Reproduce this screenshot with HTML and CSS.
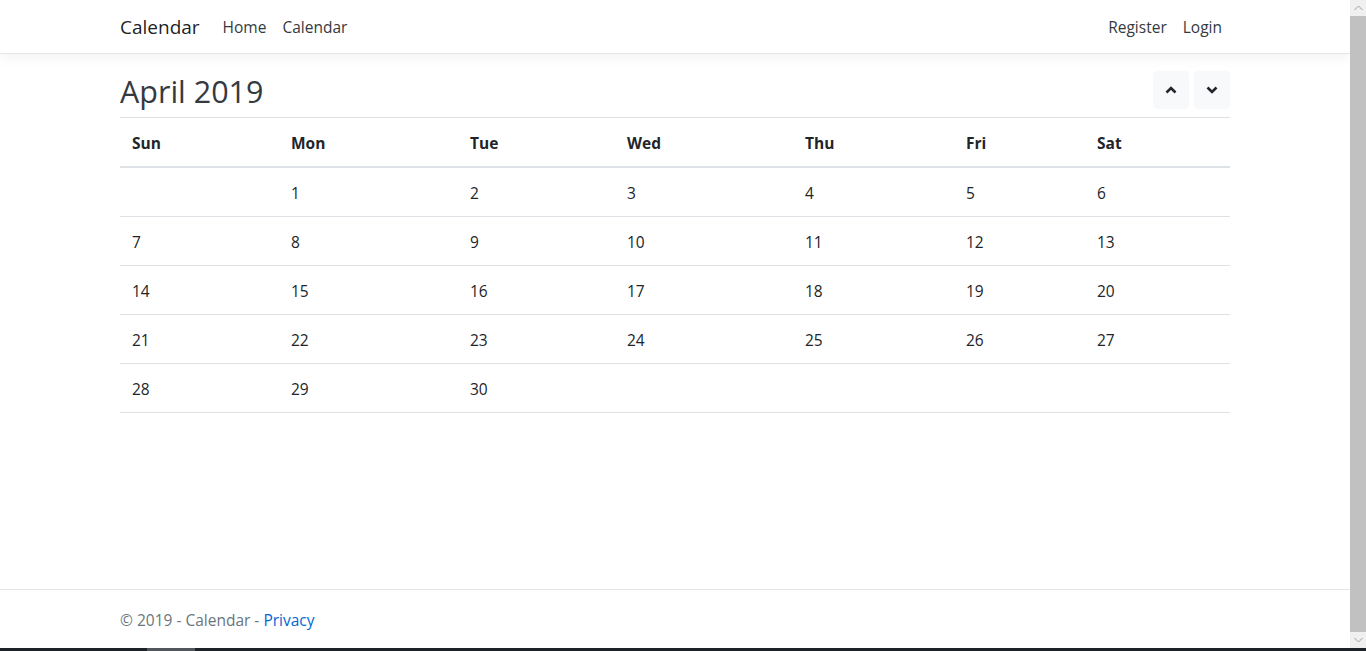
FILE: index.html
```html
<!DOCTYPE html>
<html lang="en">
<head>
<meta charset="utf-8">
<title>Calendar</title>
<link rel="stylesheet" href="styles.css">
</head>
<body>
<div class="screen">
  <div class="page">
    <header class="navbar">
      <div class="container nav-inner">
        <div class="nav-left">
          <a class="brand" href="#">Calendar</a>
          <a class="nav-link" href="#">Home</a>
          <a class="nav-link" href="#">Calendar</a>
        </div>
        <div class="nav-right">
          <a class="nav-link" href="#">Register</a>
          <a class="nav-link" href="#">Login</a>
        </div>
      </div>
    </header>
    <main class="container main">
      <div class="head">
        <h1 class="title">April 2019</h1>
        <div class="btns">
          <button class="btn" aria-label="Previous month">
            <svg width="12" height="8" viewBox="0 0 12 8"><polyline points="1.5,6.5 6,2 10.5,6.5" fill="none" stroke="#212529" stroke-width="2.6" stroke-linecap="butt" stroke-linejoin="miter"/></svg>
          </button>
          <button class="btn" aria-label="Next month">
            <svg width="12" height="8" viewBox="0 0 12 8"><polyline points="1.5,1.5 6,6 10.5,1.5" fill="none" stroke="#212529" stroke-width="2.6" stroke-linecap="butt" stroke-linejoin="miter"/></svg>
          </button>
        </div>
      </div>
      <table class="cal">
        <colgroup>
          <col class="w1"><col class="w2"><col class="w3"><col class="w4"><col class="w5"><col class="w6"><col class="w7">
        </colgroup>
        <thead>
          <tr><th>Sun</th><th>Mon</th><th>Tue</th><th>Wed</th><th>Thu</th><th>Fri</th><th>Sat</th></tr>
        </thead>
        <tbody>
          <tr><td></td><td>1</td><td>2</td><td>3</td><td>4</td><td>5</td><td>6</td></tr>
          <tr><td>7</td><td>8</td><td>9</td><td>10</td><td>11</td><td>12</td><td>13</td></tr>
          <tr><td>14</td><td>15</td><td>16</td><td>17</td><td>18</td><td>19</td><td>20</td></tr>
          <tr><td>21</td><td>22</td><td>23</td><td>24</td><td>25</td><td>26</td><td>27</td></tr>
          <tr><td>28</td><td>29</td><td>30</td><td></td><td></td><td></td><td></td></tr>
        </tbody>
      </table>
    </main>
    <footer class="footer">
      <div class="container">&copy; 2019 - Calendar - <a class="privacy" href="#">Privacy</a></div>
    </footer>
  </div>
  <div class="scrollbar">
    <div class="sb-btn">
      <svg width="9" height="6" viewBox="0 0 9 6"><polyline points="0.5,5 4.5,1 8.5,5" fill="none" stroke="#a0a0a0" stroke-width="1"/></svg>
    </div>
    <div class="sb-thumb"></div>
    <div class="sb-btn">
      <svg width="9" height="6" viewBox="0 0 9 6"><polyline points="0.5,1 4.5,5 8.5,1" fill="none" stroke="#a0a0a0" stroke-width="1"/></svg>
    </div>
  </div>
</div>
<div class="taskbar"><div class="tb-gap"></div><div class="tb-item"></div></div>
</body>
</html>
```

FILE: styles.css
```css
* { box-sizing: border-box; }
html, body { margin: 0; padding: 0; }
body {
  height: 651px;
  overflow: hidden;
  display: flex;
  flex-direction: column;
  font-family: "Open Sans", "Noto Sans", sans-serif;
  font-size: 15.5px;
  line-height: 24px;
  color: #212529;
  background: #fff;
}
a { text-decoration: none; }
.screen {
  display: flex;
  height: 648px;
}
.page {
  width: 1350px;
  display: flex;
  flex-direction: column;
}
.container {
  width: 1110px;
  margin: 0 auto;
}
.navbar {
  height: 54px;
  border-bottom: 1px solid #e5e5e5;
  box-shadow: 0 4px 12px rgba(0,0,0,.05);
  display: flex;
  align-items: center;
}
.nav-inner {
  display: flex;
  justify-content: space-between;
  align-items: center;
}
.nav-left, .nav-right { display: flex; align-items: center; }
.brand {
  font-size: 19px;
  line-height: 30px;
  color: rgba(0,0,0,.9);
  margin-right: 16px;
}
.nav-left .brand + .nav-link { margin-left: -1px; }
.nav-link {
  padding: 8px;
  color: #343a40;
}
.main {
  flex: 1;
  padding-top: 16px;
}
.head {
  display: flex;
  justify-content: space-between;
  align-items: flex-start;
}
.title {
  margin: 0 0 4px;
  font-size: 30.5px;
  font-weight: 400;
  line-height: 43px;
  color: #343a40;
}
.btns {
  display: flex;
  gap: 5px;
  margin-top: 1px;
}
.btn {
  width: 36px;
  height: 38px;
  border: 1px solid #f8f9fa;
  border-radius: 4px;
  background: #f8f9fa;
  padding: 0;
  display: flex;
  align-items: center;
  justify-content: center;
}
.cal {
  width: 1110px;
  table-layout: fixed;
  border-collapse: collapse;
}
.w1 { width: 159px; }
.w2 { width: 179px; }
.w3 { width: 157px; }
.w4 { width: 178px; }
.w5 { width: 161px; }
.w6 { width: 131px; }
.w7 { width: 145px; }
.cal th, .cal td {
  padding: 13px 12px 11px;
  text-align: left;
  vertical-align: top;
  height: 49px;
}
.cal th {
  font-weight: 700;
  border-top: 1px solid #dee2e6;
  border-bottom: 2px solid #dee2e6;
}
.cal td {
  border-bottom: 1px solid #dee2e6;
}
.footer {
  height: 59px;
  border-top: 1px solid #e5e5e5;
  line-height: 61px;
  color: #6c757d;
  overflow: hidden;
}
.privacy { color: #0366d6; }
.scrollbar {
  width: 16px;
  display: flex;
  flex-direction: column;
  background: #f0f0f0;
}
.sb-btn {
  height: 16px;
  display: flex;
  align-items: center;
  justify-content: center;
  background: #f0f0f0;
}
.sb-thumb {
  flex: 1;
  background: #c1c1c1;
}
.taskbar {
  height: 3px;
  background: #1c2228;
  display: flex;
}
.tb-gap { width: 147px; }
.tb-item { width: 48px; background: #50565c; }
```
